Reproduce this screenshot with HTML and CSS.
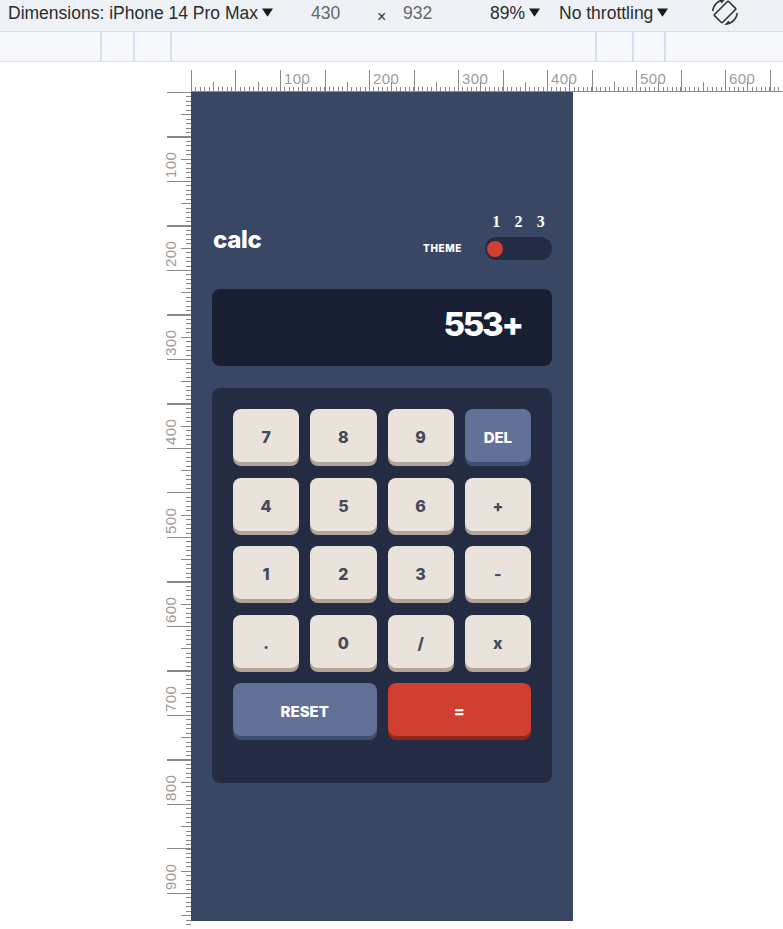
FILE: index.html
```html
<!DOCTYPE html>
<html lang="en">
<head>
<meta charset="utf-8">
<title>Calculator – device mode</title>
<link rel="stylesheet" href="styles.css">
</head>
<body>
<div class="toolbar">
  <div class="tb-item tb-dims">Dimensions: iPhone 14 Pro Max<svg class="caret" viewBox="0 0 12 9"><polygon points="0,0 12,0 6,9"/></svg></div>
  <div class="tb-item tb-w">430</div>
  <div class="tb-item tb-x">×</div>
  <div class="tb-item tb-h">932</div>
  <div class="tb-item tb-zoom">89%<svg class="caret" viewBox="0 0 12 9"><polygon points="0,0 12,0 6,9"/></svg></div>
  <div class="tb-item tb-throttle">No throttling<svg class="caret" viewBox="0 0 12 9"><polygon points="0,0 12,0 6,9"/></svg></div>
  <svg class="rotate" viewBox="0 0 24 24"><g transform="translate(24 0) scale(-1 1)"><path d="M16.48 2.52c3.27 1.55 5.61 4.72 5.970 8.48h1.5C23.44 4.84 18.29 0 12 0l-.66.03 3.81 3.81 1.33-1.32zm-6.25-.77c-.59-.59-1.54-.59-2.12 0L1.75 8.11c-.59.59-.59 1.54 0 2.12l12.02 12.02c.59.59 1.54.59 2.12 0l6.36-6.36c.59-.59.59-1.54 0-2.12L10.23 1.75zm4.6 19.44L2.81 9.17l6.36-6.36 12.02 12.02-6.36 6.36zm-7.31.29C4.25 19.94 1.91 16.76 1.55 13H.05C.56 19.16 5.71 24 12 24l.66-.03-3.81-3.81-1.33 1.32z"/></g></svg>
</div>
<div class="mq-band">
  <i class="mq mq1"></i><i class="mq mq2"></i><i class="mq mq3"></i><i class="mq mq4"></i><i class="mq mq5"></i><i class="mq mq6"></i>
</div>
<div class="stage">
  <div class="corner"></div>
  <div class="hruler">
    <div class="hlabels"><span>100</span><span>200</span><span>300</span><span>400</span><span>500</span><span>600</span></div>
  </div>
  <div class="vruler">
    <div class="vlabels"><span>100</span><span>200</span><span>300</span><span>400</span><span>500</span><span>600</span><span>700</span><span>800</span><span>900</span></div>
    <div class="vticks"></div>
  </div>
  <div class="device">
    <main class="calc">
      <header class="calc-head">
        <h1 class="logo">calc</h1>
        <div class="theme">
          <span class="theme-label">THEME</span>
          <div class="theme-switch">
            <div class="theme-nums"><span>1</span><span>2</span><span>3</span></div>
            <div class="toggle"><span class="knob"></span></div>
          </div>
        </div>
      </header>
      <div class="screen">553+</div>
      <div class="keypad">
        <button class="key">7</button>
        <button class="key">8</button>
        <button class="key">9</button>
        <button class="key key-alt">DEL</button>
        <button class="key">4</button>
        <button class="key">5</button>
        <button class="key">6</button>
        <button class="key">+</button>
        <button class="key">1</button>
        <button class="key">2</button>
        <button class="key">3</button>
        <button class="key">-</button>
        <button class="key">.</button>
        <button class="key">0</button>
        <button class="key">/</button>
        <button class="key">x</button>
        <button class="key key-alt key-wide">RESET</button>
        <button class="key key-eq key-wide">=</button>
      </div>
    </main>
  </div>
</div>
</body>
</html>
```
FILE: styles.css
```css
* { box-sizing: border-box; margin: 0; padding: 0; }
html, body { width: 783px; height: 929px; overflow: hidden; background: #fff; }
body { font-family: "Liberation Sans", Arial, sans-serif; }

/* ---------- devtools toolbar ---------- */
.toolbar {
  height: 32px;
  background: #eef1f5;
  border-bottom: 1px solid #d6e0ec;
  display: flex;
  align-items: flex-start;
  padding: 3px 0 0 8px;
  font-size: 17.5px;
  line-height: 20px;
  color: #2b2b2b;
  white-space: nowrap;
}
.tb-item { display: flex; align-items: flex-start; }
.caret { width: 11px; height: 9px; margin: 5px 0 0 4px; fill: #1a1a1a; }
.tb-dims { width: 303px; }
.tb-w { width: 66px; color: #666; }
.tb-x { width: 26px; color: #333; font-size: 16px; padding-top: 4px; }
.tb-h { width: 87px; color: #666; }
.tb-zoom { width: 69px; }
.tb-throttle { width: 153px; }
.rotate { width: 26px; height: 26px; margin-top: -4px; fill: #333; }

.mq-band {
  height: 30px;
  background: #f6f8fb;
  border-bottom: 1px solid #dde3eb;
  display: flex;
}
.mq { display: block; width: 2px; height: 100%; background: #d3e0f1; }
.mq1 { margin-left: 100px; }
.mq2 { margin-left: 31px; }
.mq3 { margin-left: 35px; }
.mq4 { margin-left: 423px; }
.mq5 { margin-left: 35px; }
.mq6 { margin-left: 30px; }

/* ---------- rulers ---------- */
.stage {
  display: grid;
  grid-template-columns: 191px 592px;
  grid-template-rows: 30px 837px;
}
.hruler {
  overflow: hidden;
  background:
    linear-gradient(#888, #888) left bottom / 100% 1px no-repeat,
    repeating-linear-gradient(90deg, #888 0 1px, transparent 1px 4.45px) left bottom / 100% 5px no-repeat,
    repeating-linear-gradient(90deg, #888 0 1px, transparent 1px 22.25px) left bottom / 100% 10px no-repeat,
    repeating-linear-gradient(90deg, #888 0 1px, transparent 1px 44.5px) left bottom / 100% 22px no-repeat;
}
.hlabels { display: flex; padding: 9px 0 0 89px; }
.hlabels span {
  flex: 0 0 89px;
  padding-left: 4px;
  font-size: 15px;
  line-height: 16px;
  color: #9c9c9c;
  letter-spacing: 0.4px;
}
.vruler { display: flex; justify-content: flex-end; overflow: hidden; }
.vlabels {
  width: 16px;
  margin-right: -12px;
  position: relative;
  z-index: 1;
  display: flex;
  flex-direction: column;
}
.vlabels span {
  height: 89px;
  flex: 0 0 89px;
  writing-mode: vertical-rl;
  transform: rotate(180deg);
  padding-top: 3px;
  font-size: 15px;
  line-height: 16px;
  color: #9c9c9c;
  letter-spacing: 0.4px;
}
.vticks {
  width: 24px;
  background:
    repeating-linear-gradient(180deg, #888 0 1px, transparent 1px 4.45px) right top / 5px 100% no-repeat,
    repeating-linear-gradient(180deg, #888 0 1px, transparent 1px 22.25px) right top / 10px 100% no-repeat,
    repeating-linear-gradient(180deg, #888 0 1px, transparent 1px 44.5px) right top / 24px 100% no-repeat;
}

/* ---------- device / calculator ---------- */
.device {
  width: 382px;
  height: 829px;
  background: #3a4764;
  padding: 122px 21px 0;
  font-family: Inter, "Noto Sans", sans-serif;
  color: #fff;
}
.calc-head { display: flex; justify-content: space-between; align-items: flex-end; }
.logo {
  font-size: 24px;
  font-weight: 800;
  line-height: 24px;
  letter-spacing: -0.3px;
  margin: 0 0 8px 1px;
}
.theme { display: flex; align-items: flex-end; gap: 23px; }
.theme-label {
  font-size: 10px;
  font-weight: 800;
  letter-spacing: 0.6px;
  line-height: 23px;
  padding-top: 2px;
}
.theme-switch { width: 67px; display: flex; flex-direction: column; }
.theme-nums {
  display: flex;
  height: 16px;
  margin-bottom: 7px;
  font-family: "Liberation Serif", "Times New Roman", serif;
  font-weight: 700;
  font-size: 16px;
  line-height: 16px;
}
.theme-nums span { flex: 1; text-align: center; }
.toggle {
  height: 23px;
  border-radius: 12px;
  background: #232c43;
  display: flex;
  align-items: center;
  padding-left: 2px;
}
.knob { width: 16px; height: 16px; border-radius: 50%; background: #d03f2f; }

.screen {
  margin-top: 29px;
  height: 77px;
  border-radius: 8px;
  background: #181f33;
  display: flex;
  align-items: center;
  justify-content: flex-end;
  padding: 0 30px 6px 0;
  font-size: 33px;
  font-weight: 800;
  line-height: 33px;
  letter-spacing: -2.2px;
}

.keypad {
  margin-top: 22px;
  background: #232c43;
  border-radius: 8px;
  padding: 21px 21px 47px;
  display: grid;
  grid-template-columns: repeat(4, 1fr);
  column-gap: 11px;
  row-gap: 15.5px;
}
.key {
  height: 53px;
  border: 0;
  border-radius: 8px;
  background: #eae3dc;
  box-shadow: 0 4px 0 #b3a497;
  color: #434a59;
  font-family: Inter, "Noto Sans", sans-serif;
  font-size: 16px;
  font-weight: 800;
  padding-top: 3px;
  display: flex;
  align-items: center;
  justify-content: center;
}
.key-alt { background: #637097; box-shadow: 0 4px 0 #404e72; color: #fff; font-size: 15px; }
.key-eq { background: #d03f2f; box-shadow: 0 4px 0 #93261a; color: #fff; }
.key-wide { grid-column: span 2; }
```
